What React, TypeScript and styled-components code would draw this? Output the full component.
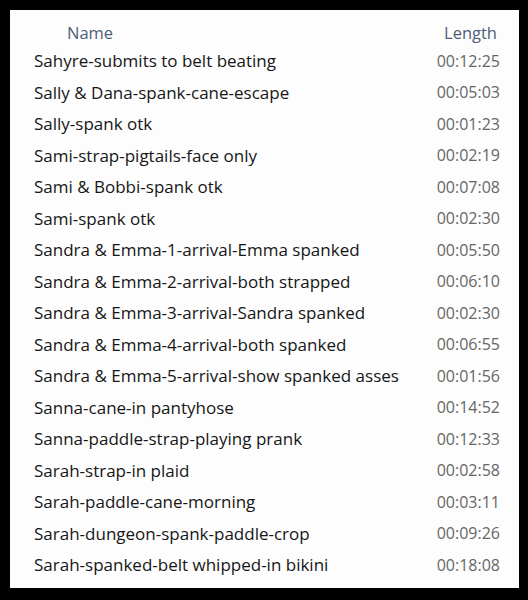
import React, { FC } from 'react';
import styled, { createGlobalStyle } from 'styled-components';

const GlobalStyle = createGlobalStyle`
  html, body {
    margin: 0;
    padding: 0;
    background: #000;
  }
`;

const Frame = styled.div`
  width: 528px;
  height: 600px;
  box-sizing: border-box;
  padding: 10px 9px 12px 10px;
  background: #000;
`;

const Panel = styled.div`
  height: 100%;
  box-sizing: border-box;
  background: #fdfdfd;
  padding: 11px 19px 0 24px;
  font-family: 'Open Sans', 'Noto Sans', sans-serif;
`;

const Row = styled.div`
  display: flex;
  justify-content: space-between;
  align-items: center;
  height: 31.5px;
  font-size: 17px;
`;

const Header = styled(Row)`
  height: 23px;
  margin-bottom: 1px;
  font-size: 16.5px;
  color: #4d6078;
`;

const HeaderName = styled.span`
  padding-left: 33px;
`;

const HeaderLength = styled.span`
  padding-right: 3px;
`;

const Title = styled.span`
  color: #161616;
`;

const Length = styled.span`
  color: #666;
  font-size: 16px;
`;

const files: [string, string][] = [
  ['Sahyre-submits to belt beating', '00:12:25'],
  ['Sally & Dana-spank-cane-escape', '00:05:03'],
  ['Sally-spank otk', '00:01:23'],
  ['Sami-strap-pigtails-face only', '00:02:19'],
  ['Sami & Bobbi-spank otk', '00:07:08'],
  ['Sami-spank otk', '00:02:30'],
  ['Sandra & Emma-1-arrival-Emma spanked', '00:05:50'],
  ['Sandra & Emma-2-arrival-both strapped', '00:06:10'],
  ['Sandra & Emma-3-arrival-Sandra spanked', '00:02:30'],
  ['Sandra & Emma-4-arrival-both spanked', '00:06:55'],
  ['Sandra & Emma-5-arrival-show spanked asses', '00:01:56'],
  ['Sanna-cane-in pantyhose', '00:14:52'],
  ['Sanna-paddle-strap-playing prank', '00:12:33'],
  ['Sarah-strap-in plaid', '00:02:58'],
  ['Sarah-paddle-cane-morning', '00:03:11'],
  ['Sarah-dungeon-spank-paddle-crop', '00:09:26'],
  ['Sarah-spanked-belt whipped-in bikini', '00:18:08'],
];

const App: FC = () => {
  return (
    <>
      <GlobalStyle />
      <Frame>
        <Panel>
          <Header>
            <HeaderName>Name</HeaderName>
            <HeaderLength>Length</HeaderLength>
          </Header>
          {files.map(([name, length]) => (
            <Row key={name}>
              <Title>{name}</Title>
              <Length>{length}</Length>
            </Row>
          ))}
        </Panel>
      </Frame>
    </>
  );
};

export default App;
